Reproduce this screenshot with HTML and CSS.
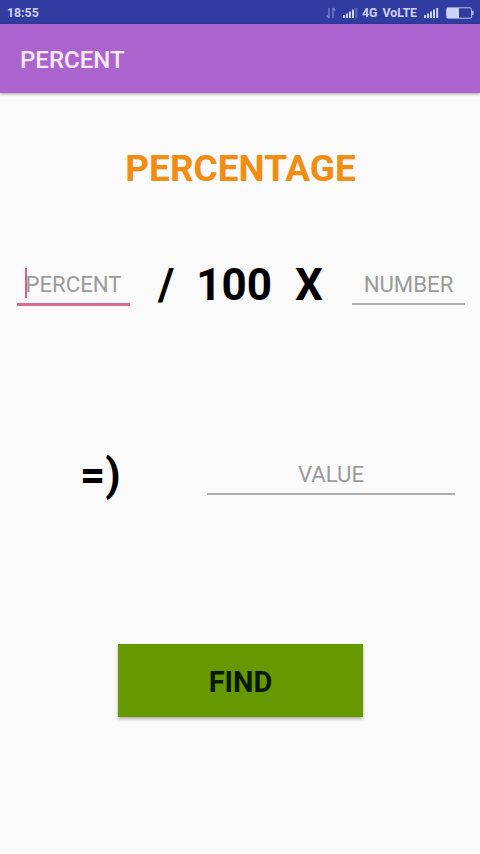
FILE: index.html
```html
<!DOCTYPE html>
<html lang="en">
<head>
<meta charset="utf-8">
<title>Percent</title>
<link rel="stylesheet" href="styles.css">
</head>
<body>
<div class="status">
  <span class="clock">18:55</span>
  <div class="indicators">
    <svg class="data" width="10" height="12" viewBox="0 0 10 12"><path d="M3 1v10M3 11L.8 8.500M7 11V1M7 1l2.200 2.500"/></svg>
    <svg class="signal" width="16" height="11" viewBox="0 0 16 11"><path d="M1 8h2v3H1zM4 6.500h2V11H4zM7 4.500h2V11H7zM10 2.500h2V11h-2z"/><path class="dim" d="M13.200 1h2v10h-2z"/></svg>
    <span class="network">4G</span>
    <span class="volte">VoLTE</span>
    <svg class="signal second" width="16" height="11" viewBox="0 0 16 11"><path d="M1 8h2v3H1zM4 6.500h2V11H4zM7 4.500h2V11H7zM10 2.500h2V11h-2zM13.200 1h2v10h-2z"/></svg>
    <svg class="battery" width="28" height="12" viewBox="0 0 28 12"><rect x=".6" y=".8" width="25" height="10.400" rx="1.500" fill="none" stroke="#b9c0ef"/><path d="M1 1h12v10H1z"/><path d="M26.200 4h1.300v4h-1.300z"/></svg>
  </div>
</div>
<header class="appbar"><h1>PERCENT</h1></header>
<main>
  <h2>PERCENTAGE</h2>
  <div class="formula">
    <div class="field focused"><i class="caret"></i><span>PERCENT</span></div>
    <b class="slash">/</b>
    <b class="hundred">100</b>
    <b class="times">X</b>
    <div class="field number"><span>NUMBER</span></div>
  </div>
  <div class="result">
    <b class="equals">=)</b>
    <div class="field value"><span>VALUE</span></div>
  </div>
  <button class="find" type="button">FIND</button>
</main>
</body>
</html>
```
FILE: styles.css
```css
* { box-sizing: border-box; }
body {
  margin: 0;
  height: 854px;
  overflow: hidden;
  background: #fafafa;
  font-family: Roboto, "Liberation Sans", sans-serif;
}
.status {
  height: 24px;
  padding: 1px 6px 0 7px;
  display: flex;
  align-items: center;
  justify-content: space-between;
  background: #303c9f;
  color: #cdd2f8;
  font-size: 12.300px;
  font-weight: 700;
}
.indicators { display: flex; align-items: center; }
.indicators svg { fill: #cdd2f8; }
.indicators .data { fill: none; stroke: #7d86cf; stroke-width: 1.3; margin-right: 6px; }
.indicators .dim { fill: #5b66b8; }
.signal { margin-right: 4px; }
.network { margin-right: 5px; }
.volte { margin-right: 6px; }
.indicators .second { margin-right: 7px; }
.appbar {
  height: 69px;
  padding: 3px 20px 0;
  display: flex;
  align-items: center;
  background: #ab63cd;
  box-shadow: 0 1px 3px rgba(0, 0, 0, .35);
}
h1 { margin: 0; color: #fdeaff; font-size: 24px; font-weight: 500; }
h2 {
  margin: 54px 0 0;
  padding-left: 1px;
  line-height: 44px;
  text-align: center;
  color: #f28c13;
  font-size: 37px;
  font-weight: 700;
}
.formula {
  margin-top: 65px;
  height: 50px;
  padding: 0 15px 0 17px;
  display: flex;
}
.formula b, .equals { font-size: 44px; line-height: 58px; color: #000; }
.field {
  position: relative;
  width: 113px;
  height: 49px;
  line-height: 56px;
  text-align: center;
  font-size: 22.2px;
  color: #9b9b9b;
  border-bottom: 2px solid #acacac;
}
.focused { height: 50px; border-bottom: 3px solid #dc6a94; }
.caret {
  position: absolute;
  left: 8px;
  top: 12px;
  width: 2px;
  height: 30px;
  background: #d4638c;
}
.slash { margin-left: 28px; }
.hundred { margin-left: 22px; }
.times { margin-left: 23px; }
.number { margin-left: auto; }
.result {
  margin-top: 140px;
  height: 50px;
  padding: 0 25px 0 80px;
  display: flex;
  justify-content: space-between;
}
.value { width: 248px; }
.find {
  display: block;
  width: 245px;
  height: 73px;
  margin: 148px 0 0 118px;
  padding: 3px 0 0;
  border: 0;
  background: #669900;
  color: #061800;
  font: 700 29px Roboto, "Liberation Sans", sans-serif;
  box-shadow: 0 2px 3px rgba(0, 0, 0, .3);
}
```
